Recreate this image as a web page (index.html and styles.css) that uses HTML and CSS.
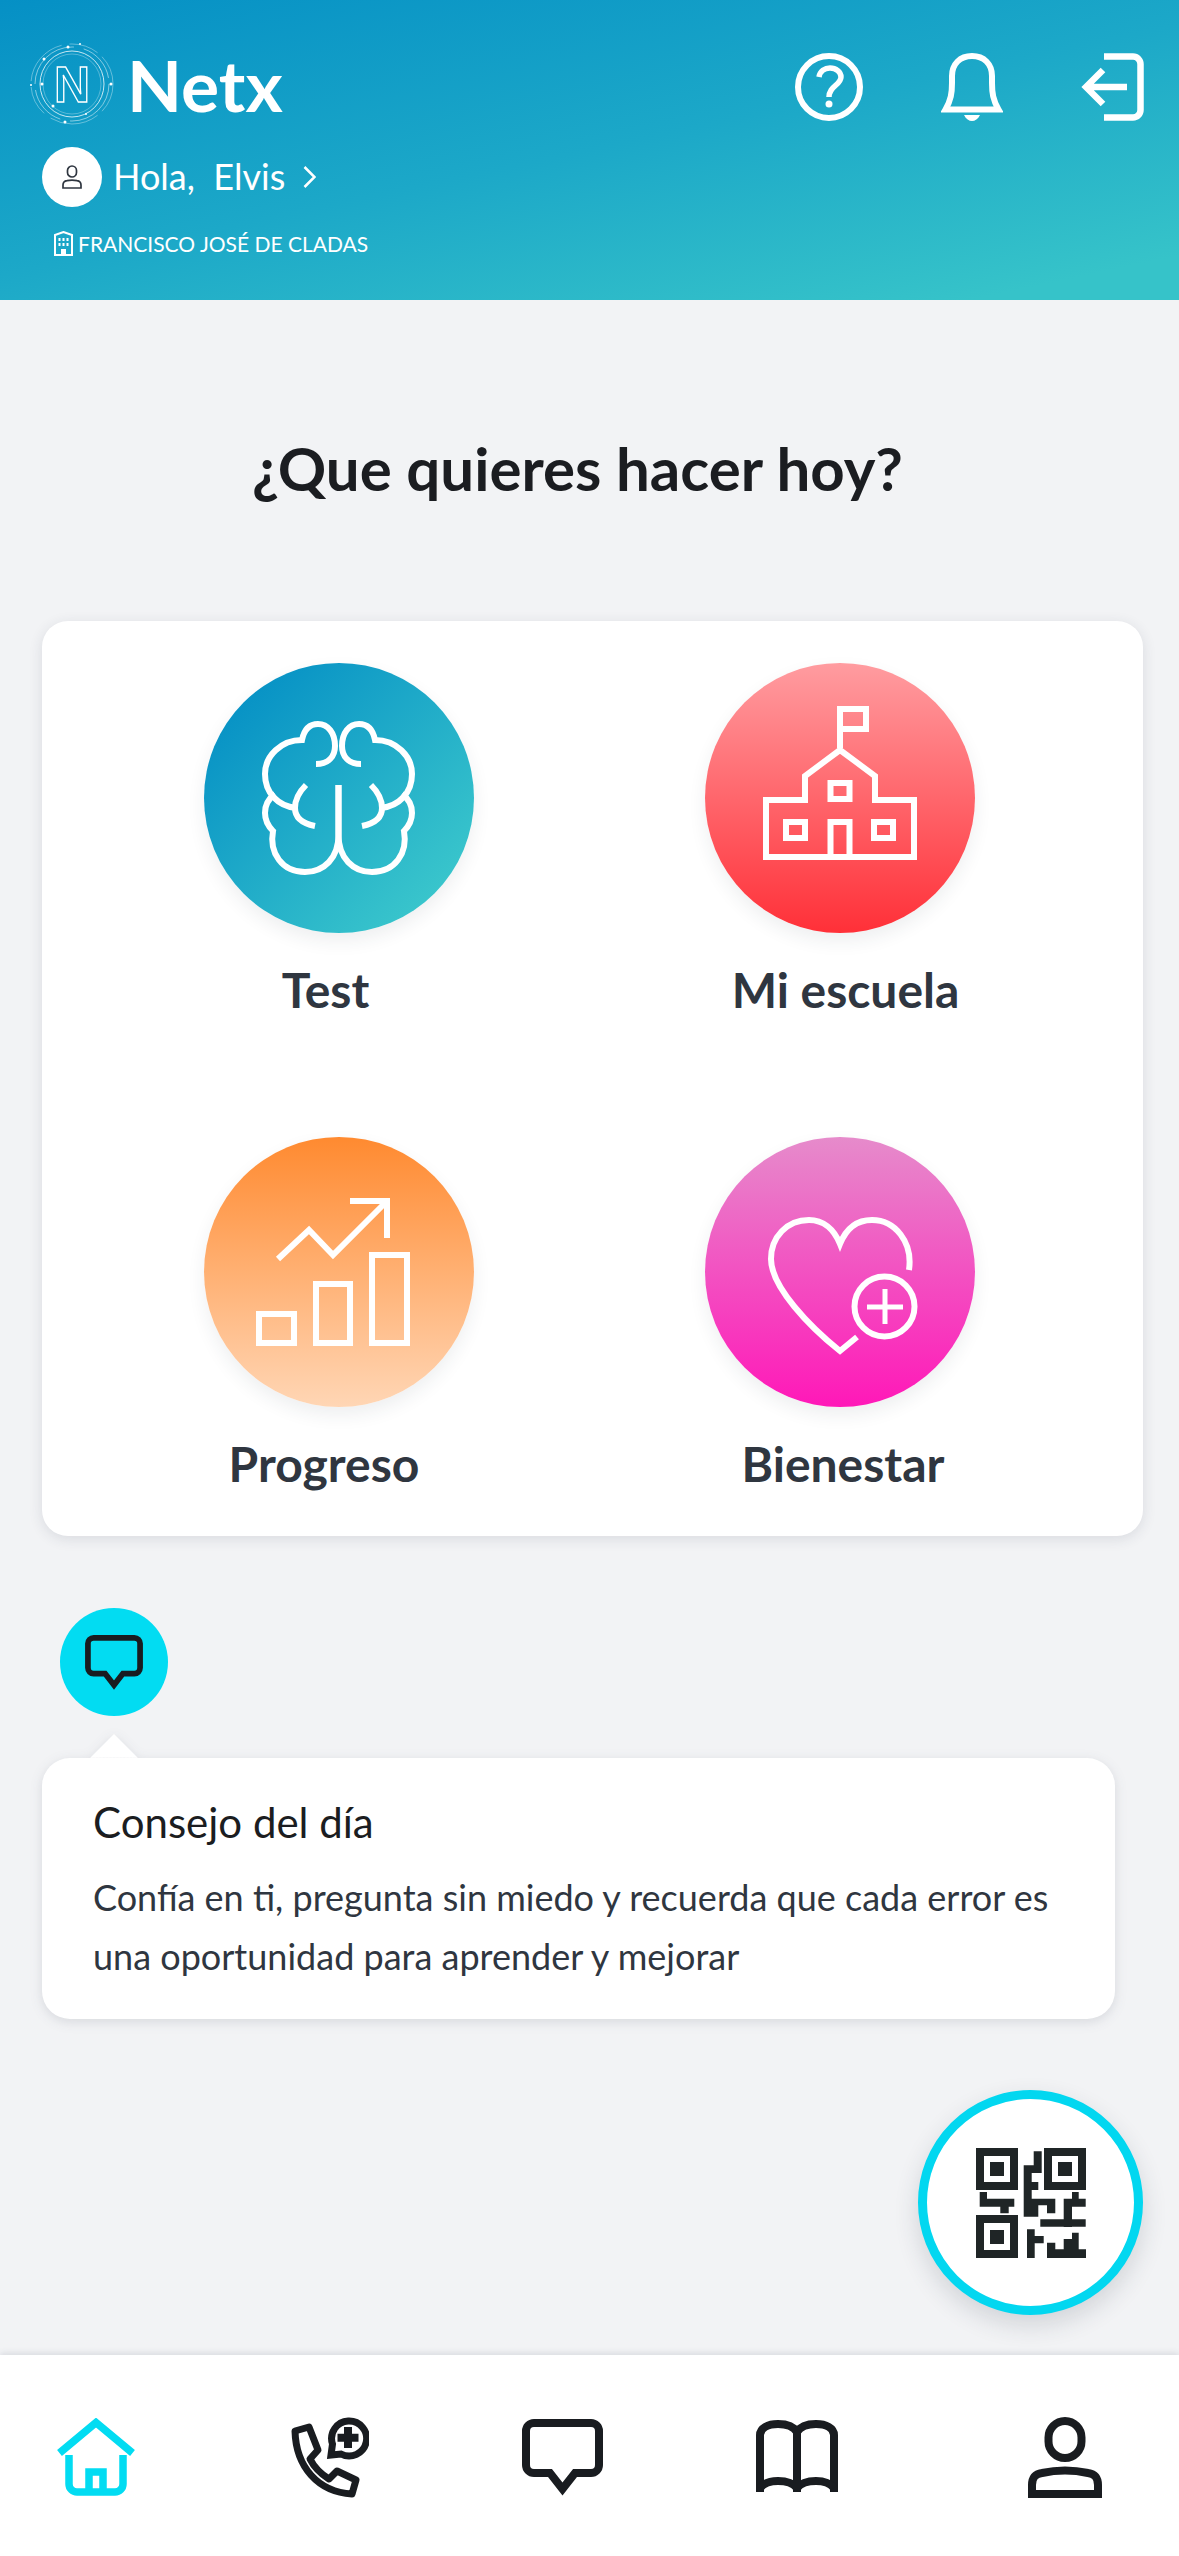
FILE: index.html
```html
<!DOCTYPE html>
<html>
<head>
    <meta charset="utf-8">
    <title>Netx</title>
    <link rel="stylesheet" href="styles.css">
</head>
<body>
<svg class="defs" width="0" height="0">
    <symbol id="i-chat" viewBox="0 0 81 77">
        <path d="M12 4H69a8 8 0 0 1 8 8V46a8 8 0 0 1-8 8H53L40.500 70 28 54H12a8 8 0 0 1-8-8V12a8 8 0 0 1 8-8Z" fill="none" stroke="#191c20" stroke-width="8"/>
    </symbol>
</svg>
<div class="app">
    <!-- cabecera -->
    <header class="top">
        <div class="top-row">
            <div class="brand">
                <svg class="logo" width="86" height="84" viewBox="0 0 86 84" fill="none" stroke="#fff">
                    <ellipse cx="43" cy="42" rx="41" ry="40" stroke-width=".6" stroke-dasharray="30 6 50 8" opacity=".6"/>
                    <ellipse cx="43" cy="42" rx="37" ry="37" stroke-width=".7" stroke-dasharray="60 10 40 6" opacity=".7"/>
                    <ellipse cx="43" cy="42" rx="32" ry="33" stroke-width=".9" opacity=".85"/>
                    <ellipse cx="43" cy="42" rx="29" ry="30" stroke-width=".5" opacity=".6"/>
                    <g fill="#fff" stroke="none">
                        <circle cx="39" cy="5" r="1.500"/><circle cx="51" cy="2" r="1"/><circle cx="15" cy="17" r="1.500"/>
                        <circle cx="13" cy="42" r="1.500"/><circle cx="82" cy="42" r="1.500"/><circle cx="36" cy="80" r="1.500"/>
                        <circle cx="57" cy="72" r="1"/><circle cx="24" cy="64" r="1.500"/><circle cx="2" cy="43" r="1"/>
                    </g>
                    <text x="43" y="60" class="logo-n">N</text>
                </svg>
                <span class="brand-name">Netx</span>
            </div>
            <div class="actions">
                <svg width="68" height="68" viewBox="0 0 68 68" fill="none" stroke="#fff" stroke-width="6">
                    <circle cx="34" cy="34" r="31"/>
                    <path d="M24 24C25 18 30 15 35 15 41 15 46 19 46 24 46 32 34 33 34 44" stroke-width="5.500"/>
                    <circle cx="34" cy="51" r="3.500" fill="#fff" stroke="none"/>
                </svg>
                <svg width="62" height="68" viewBox="0 0 62 68" fill="none" stroke="#fff" stroke-width="6">
                    <path d="M4.500 56.500C10 47 11 40 11 30V23C11 11 19 3 31 3 43 3 51 11 51 23V30C51 40 52 47 57.500 56.500Z"/>
                    <path d="M23 62H39C37 66 34 68 31 68 28 68 25 66 23 62Z" fill="#fff" stroke="none"/>
                </svg>
                <svg width="63" height="68" viewBox="0 0 63 68" fill="none" stroke="#fff" stroke-width="6.500">
                    <path d="M23 3.500H52a7.500 7.500 0 0 1 7.500 7.500V57a7.500 7.500 0 0 1-7.500 7.500H23"/>
                    <path d="M46 34H6M22 17 5 34 22 51"/>
                </svg>
            </div>
        </div>
        <div class="greeting">
            <span class="avatar">
                <svg width="20" height="24" viewBox="0 0 20 24" fill="none" stroke="#2f3640" stroke-width="1.700">
                    <rect x="5.500" y="1" width="9" height="11" rx="4.500"/>
                    <path d="M1 23V20C1 17 3 16 5 15.700 8 15 12 15 15 15.700 17 16 19 17 19 20V23Z"/>
                </svg>
            </span>
            <span class="hello">Hola,&nbsp; Elvis</span>
            <svg class="chevron" width="13" height="22" viewBox="0 0 13 22" fill="none" stroke="#fff" stroke-width="2.500">
                <path d="M1.500 1 11.500 11 1.500 21"/>
            </svg>
        </div>
        <div class="school">
            <svg width="19" height="25" viewBox="0 0 19 25">
                <path d="M1 24V4L9.500 1 18 4V24Z" fill="none" stroke="#fff" stroke-width="2"/>
                <path d="M4.500 7h2v3h-2ZM8.500 7h2v3h-2ZM12.500 7h2v3h-2ZM4.500 12h2v3h-2ZM8.500 12h2v3h-2ZM12.500 12h2v3h-2ZM7 18h5v6H7Z" fill="#fff"/>
            </svg>
            <span>FRANCISCO JOSÉ DE CLADAS</span>
        </div>
    </header>

    <main class="content">
        <h1 class="title">¿Que quieres hacer hoy?</h1>

        <section class="menu">
            <div class="menu-item left">
                <span class="disc disc-test">
                    <svg width="270" height="270" viewBox="0 0 270 270" fill="none" stroke="#fff" stroke-width="6">
                        <g id="brain-half">
                            <path d="M112 101C125 101 131 93 131 83 131 70 124 61 114 61 105 61 100 67 98 77 77 77 61 93 61 111 61 130 74 143 92 145"/>
                            <path d="M71 131C64 136 61 143 61 150 61 158 64 163 69 168 65 190 78 209 101 209 120 209 134.500 195 134.500 172V122"/>
                            <path d="M102 122C95 129 91 136 91 145 91 153 96 160 111 163"/>
                        </g>
                        <use href="#brain-half" transform="matrix(-1 0 0 1 269 0)"/>
                    </svg>
                </span>
                <span class="menu-label label-test">Test</span>
            </div>
            <div class="menu-item right">
                <span class="disc disc-school">
                    <svg width="270" height="270" viewBox="0 0 270 270" fill="none" stroke="#fff" stroke-width="6">
                        <path d="M135 85V46H161V66H135"/>
                        <path d="M135 87 100 113V137H61V194H209V137H170V113Z"/>
                        <rect x="125.500" y="120" width="19" height="16"/>
                        <rect x="81" y="159" width="19" height="16"/>
                        <rect x="169" y="159" width="19" height="16"/>
                        <path d="M125.500 194V159H144.500V194"/>
                    </svg>
                </span>
                <span class="menu-label label-school">Mi escuela</span>
            </div>
            <div class="menu-item left">
                <span class="disc disc-progress">
                    <svg width="270" height="270" viewBox="0 0 270 270" fill="none" stroke="#fff" stroke-width="6">
                        <rect x="55" y="177" width="35" height="29"/>
                        <rect x="112" y="147" width="34" height="59"/>
                        <rect x="168" y="118" width="35" height="88"/>
                        <path d="M74 122 105 93 129 118 183 64"/>
                        <path d="M146 64H183V101"/>
                    </svg>
                </span>
                <span class="menu-label label-progress">Progreso</span>
            </div>
            <div class="menu-item right">
                <span class="disc disc-health">
                    <svg width="270" height="270" viewBox="0 0 270 270" fill="none" stroke="#fff" stroke-width="6">
                        <path d="M204 133C208 105 190 83 167 83 152 83 141 92 135 107 129 92 118 83 104 83 82 83 66 100 66 122 66 150 105 190 135 214L152 200"/>
                        <circle cx="179.500" cy="169.500" r="30"/>
                        <path d="M162 170H198M180 152V187" stroke-width="5"/>
                    </svg>
                </span>
                <span class="menu-label label-health">Bienestar</span>
            </div>
        </section>

        <span class="tip-icon"><svg width="58" height="55"><use href="#i-chat"/></svg></span>
        <section class="tip">
            <h2 class="tip-title">Consejo del día</h2>
            <p class="tip-text">Confía en ti, pregunta sin miedo y recuerda que cada error es una oportunidad para aprender y mejorar</p>
        </section>
    </main>

    <button class="qr-btn">
        <svg width="110" height="110" viewBox="0 0 110 110" fill="#1f2526">
            <path fill-rule="evenodd" d="M0 0H42V42H0ZM8 8V34H34V8ZM14 14H28V28H14ZM68 0H110V42H68ZM76 8V34H102V8ZM82 14H96V28H82ZM0 67H42V110H0ZM8 75V102H34V75ZM14 82H28V96H14Z"/>
            <path d="M57.700 3.300H65.700V25H47.700V17.300H57.700ZM47.700 17.300H55.700V68.700H47.700ZM55 34H62.300V42H55ZM55 50.700H62.300V68.700H55ZM62 50.700H79.300V57.300H62ZM71 50.700H79.300V65.300H71ZM96 44H102.700V51H96ZM87.700 50.700H109.700V58.700H87.700ZM87.700 58H96V79H87.700ZM64.300 71.300H109.700V78.700H64.300ZM51 81.300H58.700V110H51ZM58 88H67.700V95.300H58ZM71 94.700H79.300V110H71ZM79 101.300H110V110H79ZM96 84.700H102.700V102H96ZM87.700 91H96V102H87.700ZM3.700 44H11V58.700H3.700ZM3.700 50.700H38.300V58.700H3.700ZM24.300 58H32.700V65.300H24.300Z"/>
        </svg>
    </button>

    <nav class="tabs">
        <svg width="78" height="78" viewBox="0 0 78 78" fill="none" stroke="#02dcf2" stroke-width="7.500">
            <path d="M2.500 35 39 4.500 75.500 35"/>
            <path d="M12 37V66a8 8 0 0 0 8 8H58a8 8 0 0 0 8-8V37"/>
            <path d="M32 74V54H46V74"/>
        </svg>
        <svg width="81" height="81" viewBox="0 0 81 81" fill="none" stroke="#191c20" stroke-width="7">
            <path d="M7 14 21 10 30 33 22 42C26 50 33 57 41 62L49 54 68 63 64 77C30 75 8 50 7 14Z" stroke-linejoin="round"/>
            <path d="M43 38 44.500 27A17.500 17.500 0 1 1 53 37Z"/>
            <path d="M49.500 20.700H70.500M60 10V31" stroke-width="8"/>
        </svg>
        <svg width="81" height="77"><use href="#i-chat"/></svg>
        <svg class="tab-book" width="82" height="72" viewBox="0 0 82 72" fill="none" stroke="#191c20" stroke-width="8">
            <path d="M4 72V15C4 8 12 4 22 4 31 4 38 7 41 12 44 7 51 4 60 4 70 4 78 8 78 15V72"/>
            <path d="M4 68C8 63 15 61 22 61 30 61 37 63 41 68 45 63 52 61 60 61 67 61 74 63 78 68"/>
            <path d="M41 12V72"/>
        </svg>
        <svg class="tab-last" width="74" height="81" viewBox="0 0 74 81" fill="none" stroke="#191c20" stroke-width="8">
            <rect x="20.500" y="4" width="33" height="37" rx="16.500"/>
            <path d="M4 77V68C4 60 8 57 14 56 28 53 46 53 60 56 66 57 70 60 70 68V77Z"/>
        </svg>
    </nav>
</div>
</body>
</html>
```

FILE: styles.css
```css
* {
    margin: 0;
    padding: 0;
    box-sizing: border-box;
}
body {
    width: 1179px;
    height: 2556px;
    background: #f2f3f5;
    font-family: "Lato", "Noto Sans", sans-serif;
    color: #1b1d21;
    overflow: hidden;
}
svg {
    display: block;
}
.defs {
    position: absolute;
}
.app {
    position: relative;
    height: 2556px;
    display: flex;
    flex-direction: column;
}

/* cabecera */
.top {
    height: 300px;
    flex: none;
    padding-top: 42px;
    background: linear-gradient(168deg, #0590c5 0%, #1ca8c8 50%, #36c3c9 92%);
    color: #fff;
}
.top-row {
    display: flex;
    justify-content: space-between;
    align-items: flex-start;
    padding: 0 35px 0 29px;
}
.brand {
    display: flex;
    align-items: center;
    gap: 12px;
    height: 84px;
}
.logo-n {
    font: 700 50px "Liberation Sans", sans-serif;
    text-anchor: middle;
    stroke-width: 1.300;
}
.brand-name {
    font-size: 71.500px;
    font-weight: 700;
    line-height: 84px;
}
.actions {
    display: flex;
    gap: 78px;
    margin-top: 11px;
}
.greeting {
    display: flex;
    align-items: center;
    height: 60px;
    margin: 21px 0 0 42px;
    font-size: 36px;
}
.avatar {
    width: 60px;
    height: 60px;
    margin-right: 11px;
    border-radius: 50%;
    background: #fff;
    display: flex;
    align-items: center;
    justify-content: center;
}
.hello {
    margin-bottom: 3px;
}
.chevron {
    margin-left: 18px;
}
.school {
    display: flex;
    align-items: center;
    gap: 5px;
    margin: 24px 0 0 54px;
    font-size: 21px;
}

/* contenido */
.content {
    flex: 1;
    padding: 0 36px 0 42px;
}
.title {
    height: 321px;
    padding: 133px 30px 0 0;
    text-align: center;
    font-size: 60px;
    line-height: 70px;
    font-weight: 700;
}
.menu {
    height: 915px;
    padding: 42px 0 0 24px;
    display: grid;
    grid-template-columns: 519px 519px;
    grid-auto-rows: 474px;
    background: #fff;
    border-radius: 26px;
    box-shadow: 0 3px 14px rgba(40, 50, 70, .12);
}
.menu-item {
    display: flex;
    flex-direction: column;
    align-items: center;
}
.disc {
    width: 270px;
    height: 270px;
    border-radius: 50%;
    box-shadow: 0 8px 18px rgba(40, 50, 70, .08);
}
.left .disc {
    margin-left: 26px;
}
.right .disc {
    margin-right: 9px;
}
.disc-test {
    background: linear-gradient(135deg, #0590c5 10%, #3cc8cc 90%);
}
.disc-school {
    background: linear-gradient(180deg, #ff9ca0 0%, #ff3038 100%);
}
.disc-progress {
    background: linear-gradient(180deg, #ff8a30 0%, #ffd6b5 100%);
}
.disc-health {
    background: linear-gradient(180deg, #e68bcb 0%, #ff18b8 100%);
}
.menu-label {
    margin-top: 27px;
    font-size: 48px;
    line-height: 60px;
    font-weight: 700;
    color: #2f3640;
}
.label-school {
    margin-left: 2px;
}
.label-progress,
.label-health {
    margin-right: 3px;
}
.tip-icon {
    width: 108px;
    height: 108px;
    margin: 72px 0 0 18px;
    border-radius: 50%;
    background: #02dcf2;
    display: flex;
    align-items: center;
    justify-content: center;
}
.tip {
    position: relative;
    width: 1073px;
    height: 261px;
    margin-top: 42px;
    padding: 39px 51px 0;
    background: #fff;
    border-radius: 28px;
    filter: drop-shadow(0 3px 6px rgba(40, 50, 70, .13));
}
.tip::before {
    content: "";
    position: absolute;
    left: 55px;
    top: -17px;
    width: 34px;
    height: 34px;
    background: #fff;
    transform: rotate(45deg);
    clip-path: polygon(0 0, 100% 0, 0 100%);
}
.tip-title {
    font-size: 42px;
    line-height: 50px;
    font-weight: 400;
}
.tip-text {
    margin-top: 21px;
    font-size: 36px;
    line-height: 59px;
    color: #2f3640;
}

/* boton qr */
.qr-btn {
    position: absolute;
    right: 36px;
    bottom: 241px;
    width: 225px;
    height: 225px;
    border: 9px solid #02d7f0;
    border-radius: 50%;
    background: #fff;
    box-shadow: 0 10px 24px rgba(40, 50, 70, .16);
    display: flex;
    align-items: center;
    justify-content: center;
}

/* barra inferior */
.tabs {
    height: 201px;
    flex: none;
    padding: 3px 77px 0 57px;
    display: flex;
    align-items: center;
    gap: 153px;
    background: #fff;
    box-shadow: 0 -2px 6px rgba(40, 50, 70, .12);
}
.tab-book {
    margin-bottom: 3px;
}
.tab-last {
    margin-left: auto;
}
```
